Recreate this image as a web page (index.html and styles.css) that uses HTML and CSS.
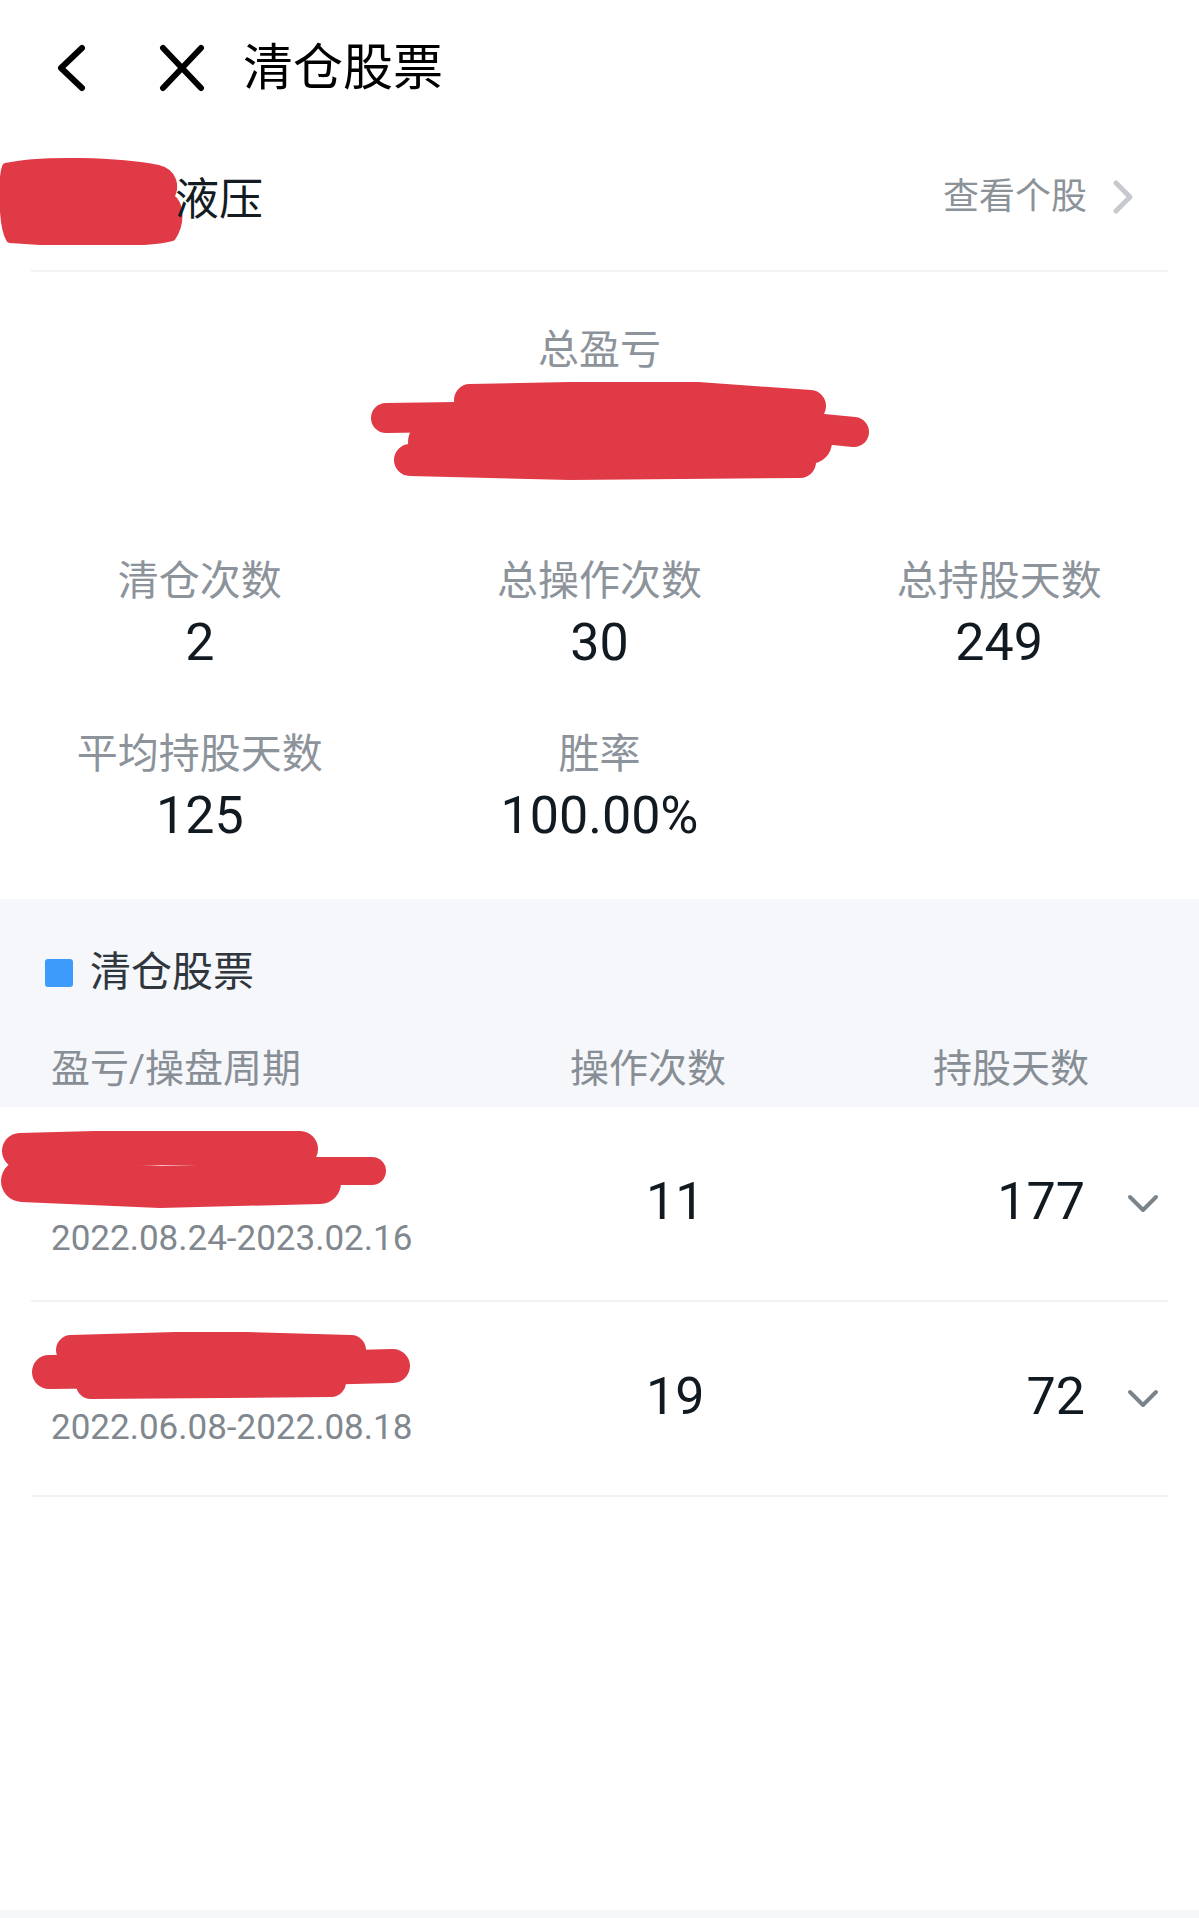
FILE: index.html
```html
<!DOCTYPE html>
<html lang="zh-CN">

<head>
    <meta charset="UTF-8">
    <meta name="viewport" content="width=device-width, initial-scale=1.0">
    <title>清仓股票</title>
    <link rel="stylesheet" href="styles.css">
</head>

<body>
    <div class="page">
        <div class="header">
            <svg class="icon-back" width="34" height="48" viewBox="0 0 34 48">
                <path d="M27 4 L6 24 L27 44" fill="none" stroke="#000" stroke-width="6" stroke-linecap="round" stroke-linejoin="round" />
            </svg>
            <svg class="icon-close" width="48" height="48" viewBox="0 0 48 48">
                <path d="M5 4 L43 44 M43 4 L5 44" fill="none" stroke="#000" stroke-width="6" stroke-linecap="round" />
            </svg>
            <div class="title">清仓股票</div>
        </div>

        <div class="stock">
            <svg class="mask mask-name" width="184" height="88" viewBox="0 0 184 88">
                <path d="M6 10 C40 2 120 4 158 12 C174 16 176 30 170 40 C182 48 180 68 172 80 C140 88 60 86 10 82 C2 70 2 20 6 10 Z" fill="#e03a47" stroke="#e03a47" stroke-width="8" stroke-linejoin="round" />
            </svg>
            <div class="stock-name">液压</div>
            <a href="javascript:;" class="stock-link">
                查看个股
                <svg width="24" height="38" viewBox="0 0 24 38">
                    <path d="M5 5 L19 19 L5 33" fill="none" stroke="#c6c9cd" stroke-width="5" stroke-linecap="round" stroke-linejoin="round" />
                </svg>
            </a>
        </div>
        <div class="divider"></div>

        <div class="summary">
            <div class="summary-label">总盈亏</div>
            <svg class="mask mask-total" width="500" height="100" viewBox="0 0 500 100">
                <g stroke="#e03a47" stroke-linecap="round" fill="none">
                    <path d="M100 18 L300 14 L440 24" stroke-width="32" />
                    <path d="M16 36 L300 32 L484 50" stroke-width="30" />
                    <path d="M60 60 L440 60" stroke-width="44" />
                    <path d="M40 78 L200 82 L430 80" stroke-width="32" />
                </g>
            </svg>
        </div>

        <div class="stats">
            <div class="stat">
                <div class="stat-label">清仓次数</div>
                <div class="stat-value">2</div>
            </div>
            <div class="stat">
                <div class="stat-label">总操作次数</div>
                <div class="stat-value">30</div>
            </div>
            <div class="stat">
                <div class="stat-label">总持股天数</div>
                <div class="stat-value">249</div>
            </div>
            <div class="stat">
                <div class="stat-label">平均持股天数</div>
                <div class="stat-value">125</div>
            </div>
            <div class="stat">
                <div class="stat-label">胜率</div>
                <div class="stat-value">100.00%</div>
            </div>
        </div>

        <div class="section">
            <div class="section-title"><span class="mark"></span>清仓股票</div>
            <div class="table-head">
                <div class="col-name">盈亏/操盘周期</div>
                <div class="col-count">操作次数</div>
                <div class="col-days">持股天数</div>
            </div>
        </div>

        <div class="list">
            <div class="row">
                <div class="col-name">
                    <svg class="mask mask-row1" width="389" height="80" viewBox="0 0 389 80">
                        <g stroke="#e03a47" stroke-linecap="round" fill="none">
                            <path d="M20 20 L170 16 L300 18" stroke-width="36" />
                            <path d="M22 50 L160 56 L320 52" stroke-width="42" />
                            <path d="M300 40 L372 40" stroke-width="28" />
                        </g>
                    </svg>
                    <div class="period">2022.08.24-2023.02.16</div>
                </div>
                <div class="col-count">11</div>
                <div class="col-days">177</div>
                <svg class="arrow-down" width="34" height="22" viewBox="0 0 34 22">
                    <path d="M4 4 L17 17 L30 4" fill="none" stroke="#7c848b" stroke-width="4" stroke-linecap="round" stroke-linejoin="round" />
                </svg>
            </div>
            <div class="row">
                <div class="col-name">
                    <svg class="mask mask-row2" width="380" height="68" viewBox="0 0 380 68">
                        <g stroke="#e03a47" stroke-linecap="round" fill="none">
                            <path d="M40 18 L180 14 L320 18" stroke-width="30" />
                            <path d="M18 40 L200 38 L362 34" stroke-width="34" />
                            <path d="M60 52 L300 50" stroke-width="30" />
                        </g>
                    </svg>
                    <div class="period">2022.06.08-2022.08.18</div>
                </div>
                <div class="col-count">19</div>
                <div class="col-days">72</div>
                <svg class="arrow-down" width="34" height="22" viewBox="0 0 34 22">
                    <path d="M4 4 L17 17 L30 4" fill="none" stroke="#7c848b" stroke-width="4" stroke-linecap="round" stroke-linejoin="round" />
                </svg>
            </div>
        </div>

        <div class="bottom-bar"></div>
    </div>
</body>

</html>
```

FILE: styles.css
```css
* {
    margin: 0;
    padding: 0;
    box-sizing: border-box;
}

body {
    font-family: Roboto, "Noto Sans CJK SC", sans-serif;
    background: #fff;
    color: #141b22;
}

.page {
    min-height: 100vh;
    display: flex;
    flex-direction: column;
}

.header {
    height: 136px;
    display: flex;
    align-items: center;
    padding-left: 55px;
}

.icon-close {
    margin-left: 69px;
}

.title {
    margin-left: 37px;
    font-size: 50px;
    line-height: 50px;
    color: #000;
}

.stock {
    height: 134px;
    display: flex;
    align-items: center;
    padding-right: 64px;
}

.mask {
    display: block;
}

.mask-name {
    margin-right: -9px;
    margin-bottom: 4px;
}

.stock-name {
    font-size: 44px;
    line-height: 44px;
    color: #141b22;
    margin-bottom: 6px;
}

.stock-link {
    margin-left: auto;
    margin-bottom: 12px;
    display: flex;
    align-items: center;
    gap: 24px;
    font-size: 36px;
    line-height: 36px;
    color: #8b9298;
    text-decoration: none;
}

.divider {
    height: 2px;
    margin: 0 31px;
    background: #f2f3f5;
}

.summary {
    display: flex;
    flex-direction: column;
    align-items: center;
    padding-top: 58px;
}

.summary-label {
    font-size: 41px;
    line-height: 41px;
    color: #8c939a;
}

.mask-total {
    margin-top: 11px;
    margin-left: 41px;
}

.stats {
    display: grid;
    grid-template-columns: repeat(3, 1fr);
    row-gap: 64px;
    padding: 78px 0 57px;
}

.stat {
    display: flex;
    flex-direction: column;
    align-items: center;
    gap: 15px;
}

.stat-label {
    font-size: 41px;
    line-height: 42px;
    color: #8c939a;
}

.stat-value {
    font-size: 52px;
    line-height: 52px;
    color: #121a21;
}

.section {
    background: #f5f7fa;
    padding: 53px 0 18px;
}

.section-title {
    display: flex;
    align-items: center;
    padding-left: 45px;
    font-size: 41px;
    line-height: 41px;
    color: #2f363d;
}

.mark {
    width: 28px;
    height: 28px;
    border-radius: 3px;
    background: #3d9cfb;
    margin-right: 17px;
}

.table-head {
    display: flex;
    align-items: center;
    margin-top: 57px;
    padding-left: 51px;
    font-size: 39px;
    line-height: 39px;
    color: #878e95;
}

.col-name {
    width: 519px;
}

.col-count {
    width: 200px;
}

.col-days {
    width: 319px;
    text-align: right;
}

.list {
    padding: 0 31px;
}

.row {
    height: 195px;
    display: flex;
    align-items: center;
    padding-left: 20px;
    border-bottom: 2px solid #f0f1f3;
}

.row .col-name {
    padding-bottom: 18px;
}

.row .col-count {
    padding-left: 76px;
    padding-bottom: 4px;
    font-size: 52px;
    line-height: 52px;
    color: #121a21;
}

.row .col-days {
    padding-right: 4px;
    padding-bottom: 4px;
    font-size: 52px;
    line-height: 52px;
    color: #121a21;
}

.mask-row1 {
    margin-left: -51px;
}

.mask-row2 {
    margin-left: -20px;
    margin-bottom: 8px;
}

.period {
    margin-top: 8px;
    font-size: 35px;
    line-height: 40px;
    color: #80878e;
}

.arrow-down {
    margin-left: 37px;
    flex-shrink: 0;
}

.bottom-bar {
    margin-top: auto;
    height: 8px;
    background: #f6f7f9;
}
```
